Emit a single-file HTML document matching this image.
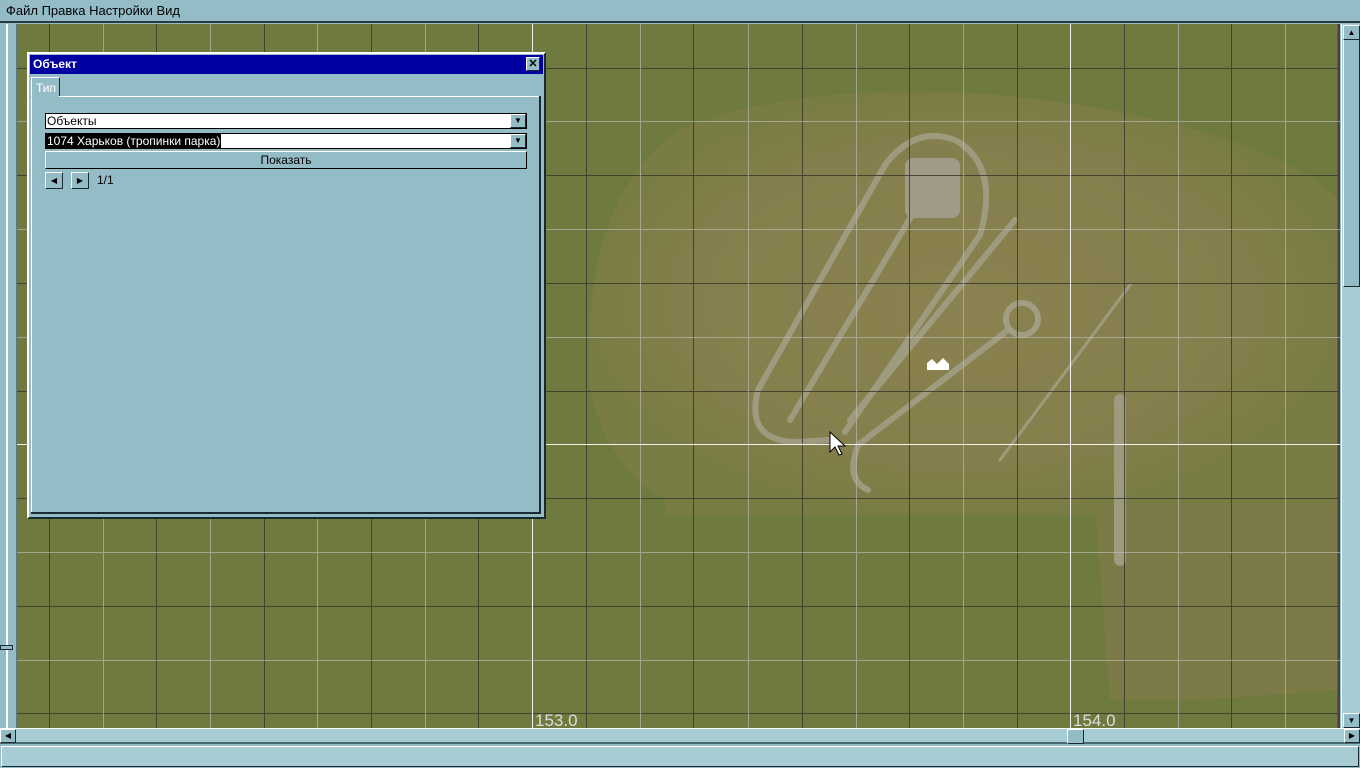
<!DOCTYPE html>
<html><head><meta charset="utf-8"><style>
*{margin:0;padding:0;box-sizing:border-box}
body{width:1360px;height:768px;overflow:hidden;background:#94bcc6;font-family:"Liberation Sans",sans-serif;position:relative;font-size:12px}
#menu{position:absolute;left:0;top:0;width:1360px;height:23px;background:#94bcc6;border-bottom:2px solid #2a3a40}
#menu span{position:absolute;top:3px;font-size:13px;color:#000}
.abs{position:absolute}
.btn{background:#94bcc6;border:1px solid;border-color:#fff #1a2a30 #1a2a30 #fff}
</style></head><body>
<div id="menu"><span style="left:6px">Файл Правка Настройки Вид</span></div>
<div class="abs" style="left:0;top:24px;width:17px;height:704px;background:#94bcc6;border-right:1px solid #5a7a80"></div>
<div class="abs" style="left:6px;top:24px;width:2px;height:704px;background:#fff"></div>
<div class="abs" style="left:0;top:645px;width:13px;height:5px;background:#94bcc6;border:1px solid #1a2a30"></div>
<svg class="abs" style="left:17px;top:24px" width="1323" height="704" viewBox="17 24 1323 704">
<defs><radialGradient id="g" cx="0.5" cy="0.5" r="0.5"><stop offset="0" stop-color="#8a8250"/><stop offset="0.75" stop-color="#847f4c"/><stop offset="1" stop-color="#7a7c45"/></radialGradient></defs>
<rect x="17" y="24" width="1323" height="704" fill="#6f7a3e"/>
<path d="M590 380 Q580 200 680 130 Q800 80 1000 95 Q1250 120 1340 200 L1340 515 L665 515 L665 500 Q600 460 590 380 Z" fill="url(#g)"/>
<path d="M1095 505 L1340 505 L1340 690 L1200 700 L1110 700 Z" fill="#7c7b47"/>
<g fill="none" stroke="#a29e84" stroke-width="6" stroke-linecap="round" opacity="0.9">
<path d="M830 440 L795 442 Q745 440 758 390 L885 165 Q915 125 955 140 Q1000 165 980 235 L845 432"/>
<path d="M790 420 L915 210"/>
<path d="M850 420 L1015 220"/>
<path d="M868 490 Q845 480 858 445 L1008 330"/>
<path d="M1000 460 L1130 285" stroke-width="3"/>
<path d="M1120 400 L1120 560" stroke-width="12"/>
</g>
<circle cx="1022" cy="319" r="16" fill="none" stroke="#a29e84" stroke-width="6"/>
<rect x="905" y="158" width="55" height="60" rx="8" fill="#a09a88"/>
<g stroke-width="1">
<g stroke="#3a3a2c" opacity="0.85"><line x1="17" y1="68.5" x2="1340" y2="68.5"/><line x1="17" y1="175.5" x2="1340" y2="175.5"/><line x1="17" y1="283.5" x2="1340" y2="283.5"/><line x1="17" y1="391.5" x2="1340" y2="391.5"/><line x1="17" y1="498.5" x2="1340" y2="498.5"/><line x1="17" y1="606.5" x2="1340" y2="606.5"/><line x1="17" y1="713.5" x2="1340" y2="713.5"/>
<line x1="49.5" y1="24" x2="49.5" y2="728"/><line x1="156.5" y1="24" x2="156.5" y2="728"/><line x1="264.5" y1="24" x2="264.5" y2="728"/><line x1="371.5" y1="24" x2="371.5" y2="728"/><line x1="478.5" y1="24" x2="478.5" y2="728"/><line x1="586.5" y1="24" x2="586.5" y2="728"/><line x1="693.5" y1="24" x2="693.5" y2="728"/><line x1="802.5" y1="24" x2="802.5" y2="728"/><line x1="909.5" y1="24" x2="909.5" y2="728"/><line x1="1017.5" y1="24" x2="1017.5" y2="728"/><line x1="1124.5" y1="24" x2="1124.5" y2="728"/><line x1="1231.5" y1="24" x2="1231.5" y2="728"/></g>
<line x1="1339" y1="24" x2="1339" y2="728" stroke-width="3" stroke="#4a4040"/>
<g stroke="#b8b8b0" opacity="0.7"><line x1="17" y1="121.5" x2="1340" y2="121.5"/><line x1="17" y1="229.5" x2="1340" y2="229.5"/><line x1="17" y1="337.5" x2="1340" y2="337.5"/><line x1="17" y1="552.5" x2="1340" y2="552.5"/><line x1="17" y1="660.5" x2="1340" y2="660.5"/>
<line x1="103.5" y1="24" x2="103.5" y2="728"/><line x1="210.5" y1="24" x2="210.5" y2="728"/><line x1="317.5" y1="24" x2="317.5" y2="728"/><line x1="425.5" y1="24" x2="425.5" y2="728"/><line x1="640.5" y1="24" x2="640.5" y2="728"/><line x1="748.5" y1="24" x2="748.5" y2="728"/><line x1="856.5" y1="24" x2="856.5" y2="728"/><line x1="963.5" y1="24" x2="963.5" y2="728"/><line x1="1178.5" y1="24" x2="1178.5" y2="728"/><line x1="1285.5" y1="24" x2="1285.5" y2="728"/></g>
<g stroke="#f0f0f0"><line x1="17" y1="444.5" x2="1340" y2="444.5"/><line x1="532.5" y1="24" x2="532.5" y2="728"/><line x1="1070.5" y1="24" x2="1070.5" y2="728"/></g>
</g>
<text x="535" y="726" font-family="Liberation Sans" font-size="17" fill="#ddd">153.0</text>
<text x="1073" y="726" font-family="Liberation Sans" font-size="17" fill="#ddd">154.0</text>
<path d="M830 432 L830 452 L835 447 L839 455 L842 454 L838 446 L845 446 Z" fill="#fff" stroke="#000" stroke-width="1"/>
<path d="M927 363 L932 359 L937 364 L943 358 L949 364 L949 370 L927 370Z" fill="#fff"/>
</svg>
<div class="abs" style="left:1341px;top:24px;width:19px;height:704px;background:#a8ccd4;border-left:1px solid #fff"></div>
<div class="abs btn" style="left:1343px;top:25px;width:17px;height:262px"></div>
<div class="abs btn" style="left:1343px;top:713px;width:17px;height:15px;text-align:center;font-size:8px;line-height:13px">▼</div>
<div class="abs btn" style="left:1343px;top:25px;width:17px;height:15px;text-align:center;font-size:8px;line-height:13px">▲</div>
<div class="abs" style="left:0;top:728px;width:1360px;height:16px;background:#a8ccd4;border-top:1px solid #fff;border-bottom:2px solid #4a6a70"></div>
<div class="abs btn" style="left:0;top:729px;width:16px;height:14px;font-size:8px;line-height:12px;text-align:center">◀</div>
<div class="abs btn" style="left:1067px;top:729px;width:17px;height:15px"></div>
<div class="abs btn" style="left:1344px;top:729px;width:16px;height:14px;font-size:8px;line-height:12px;text-align:center">▶</div>
<div class="abs" style="left:1px;top:746px;width:1358px;height:21px;background:#a8ccd4;border:1px solid;border-color:#fff #1a2a30 #1a2a30 #fff"></div>
<div class="abs" style="left:27px;top:52px;width:519px;height:467px;background:#94bcc6;border:2px solid;border-color:#fff #1a2a30 #1a2a30 #fff"></div>
<div class="abs" style="left:30px;top:55px;width:513px;height:19px;background:#0000a0;color:#fff;font-weight:bold;font-size:12px;line-height:19px;padding-left:3px">Объект</div>
<div class="abs btn" style="left:526px;top:57px;width:14px;height:14px;font-size:11px;line-height:12px;text-align:center;font-weight:bold">✕</div>
<div class="abs" style="left:31px;top:77px;width:29px;height:20px;border:1px solid;border-color:#fff #1a2a30 transparent #fff;color:#fff;padding:3px 0 0 4px;font-size:12px">Тип</div>
<div class="abs" style="left:59px;top:96px;width:482px;height:1px;background:#fff"></div>
<div class="abs" style="left:31px;top:97px;width:1px;height:416px;background:#fff"></div>
<div class="abs" style="left:539px;top:96px;width:2px;height:418px;background:#1a2a30"></div>
<div class="abs" style="left:31px;top:512px;width:510px;height:2px;background:#1a2a30"></div>
<div class="abs" style="left:45px;top:113px;width:482px;height:16px;background:#fff;border:1px solid #000;font-size:12px;line-height:14px;padding-left:1px">Объекты</div>
<div class="abs btn" style="left:510px;top:114px;width:16px;height:14px;font-size:8px;line-height:12px;text-align:center">▼</div>
<div class="abs" style="left:45px;top:133px;width:482px;height:16px;background:#fff;border:1px solid #000;font-size:12px;line-height:14px"><span style="background:#000;color:#fff;padding:0 1px">1074 Харьков (тропинки парка)</span></div>
<div class="abs btn" style="left:510px;top:134px;width:16px;height:14px;font-size:8px;line-height:12px;text-align:center">▼</div>
<div class="abs btn" style="left:45px;top:151px;width:482px;height:18px;text-align:center;font-size:12px;line-height:16px;border-right-color:#000;border-bottom-color:#000">Показать</div>
<div class="abs btn" style="left:45px;top:172px;width:18px;height:17px;font-size:8px;line-height:15px;text-align:center">◀</div>
<div class="abs btn" style="left:71px;top:172px;width:18px;height:17px;font-size:8px;line-height:15px;text-align:center">▶</div>
<div class="abs" style="left:97px;top:173px;font-size:12px">1/1</div>
</body></html>
